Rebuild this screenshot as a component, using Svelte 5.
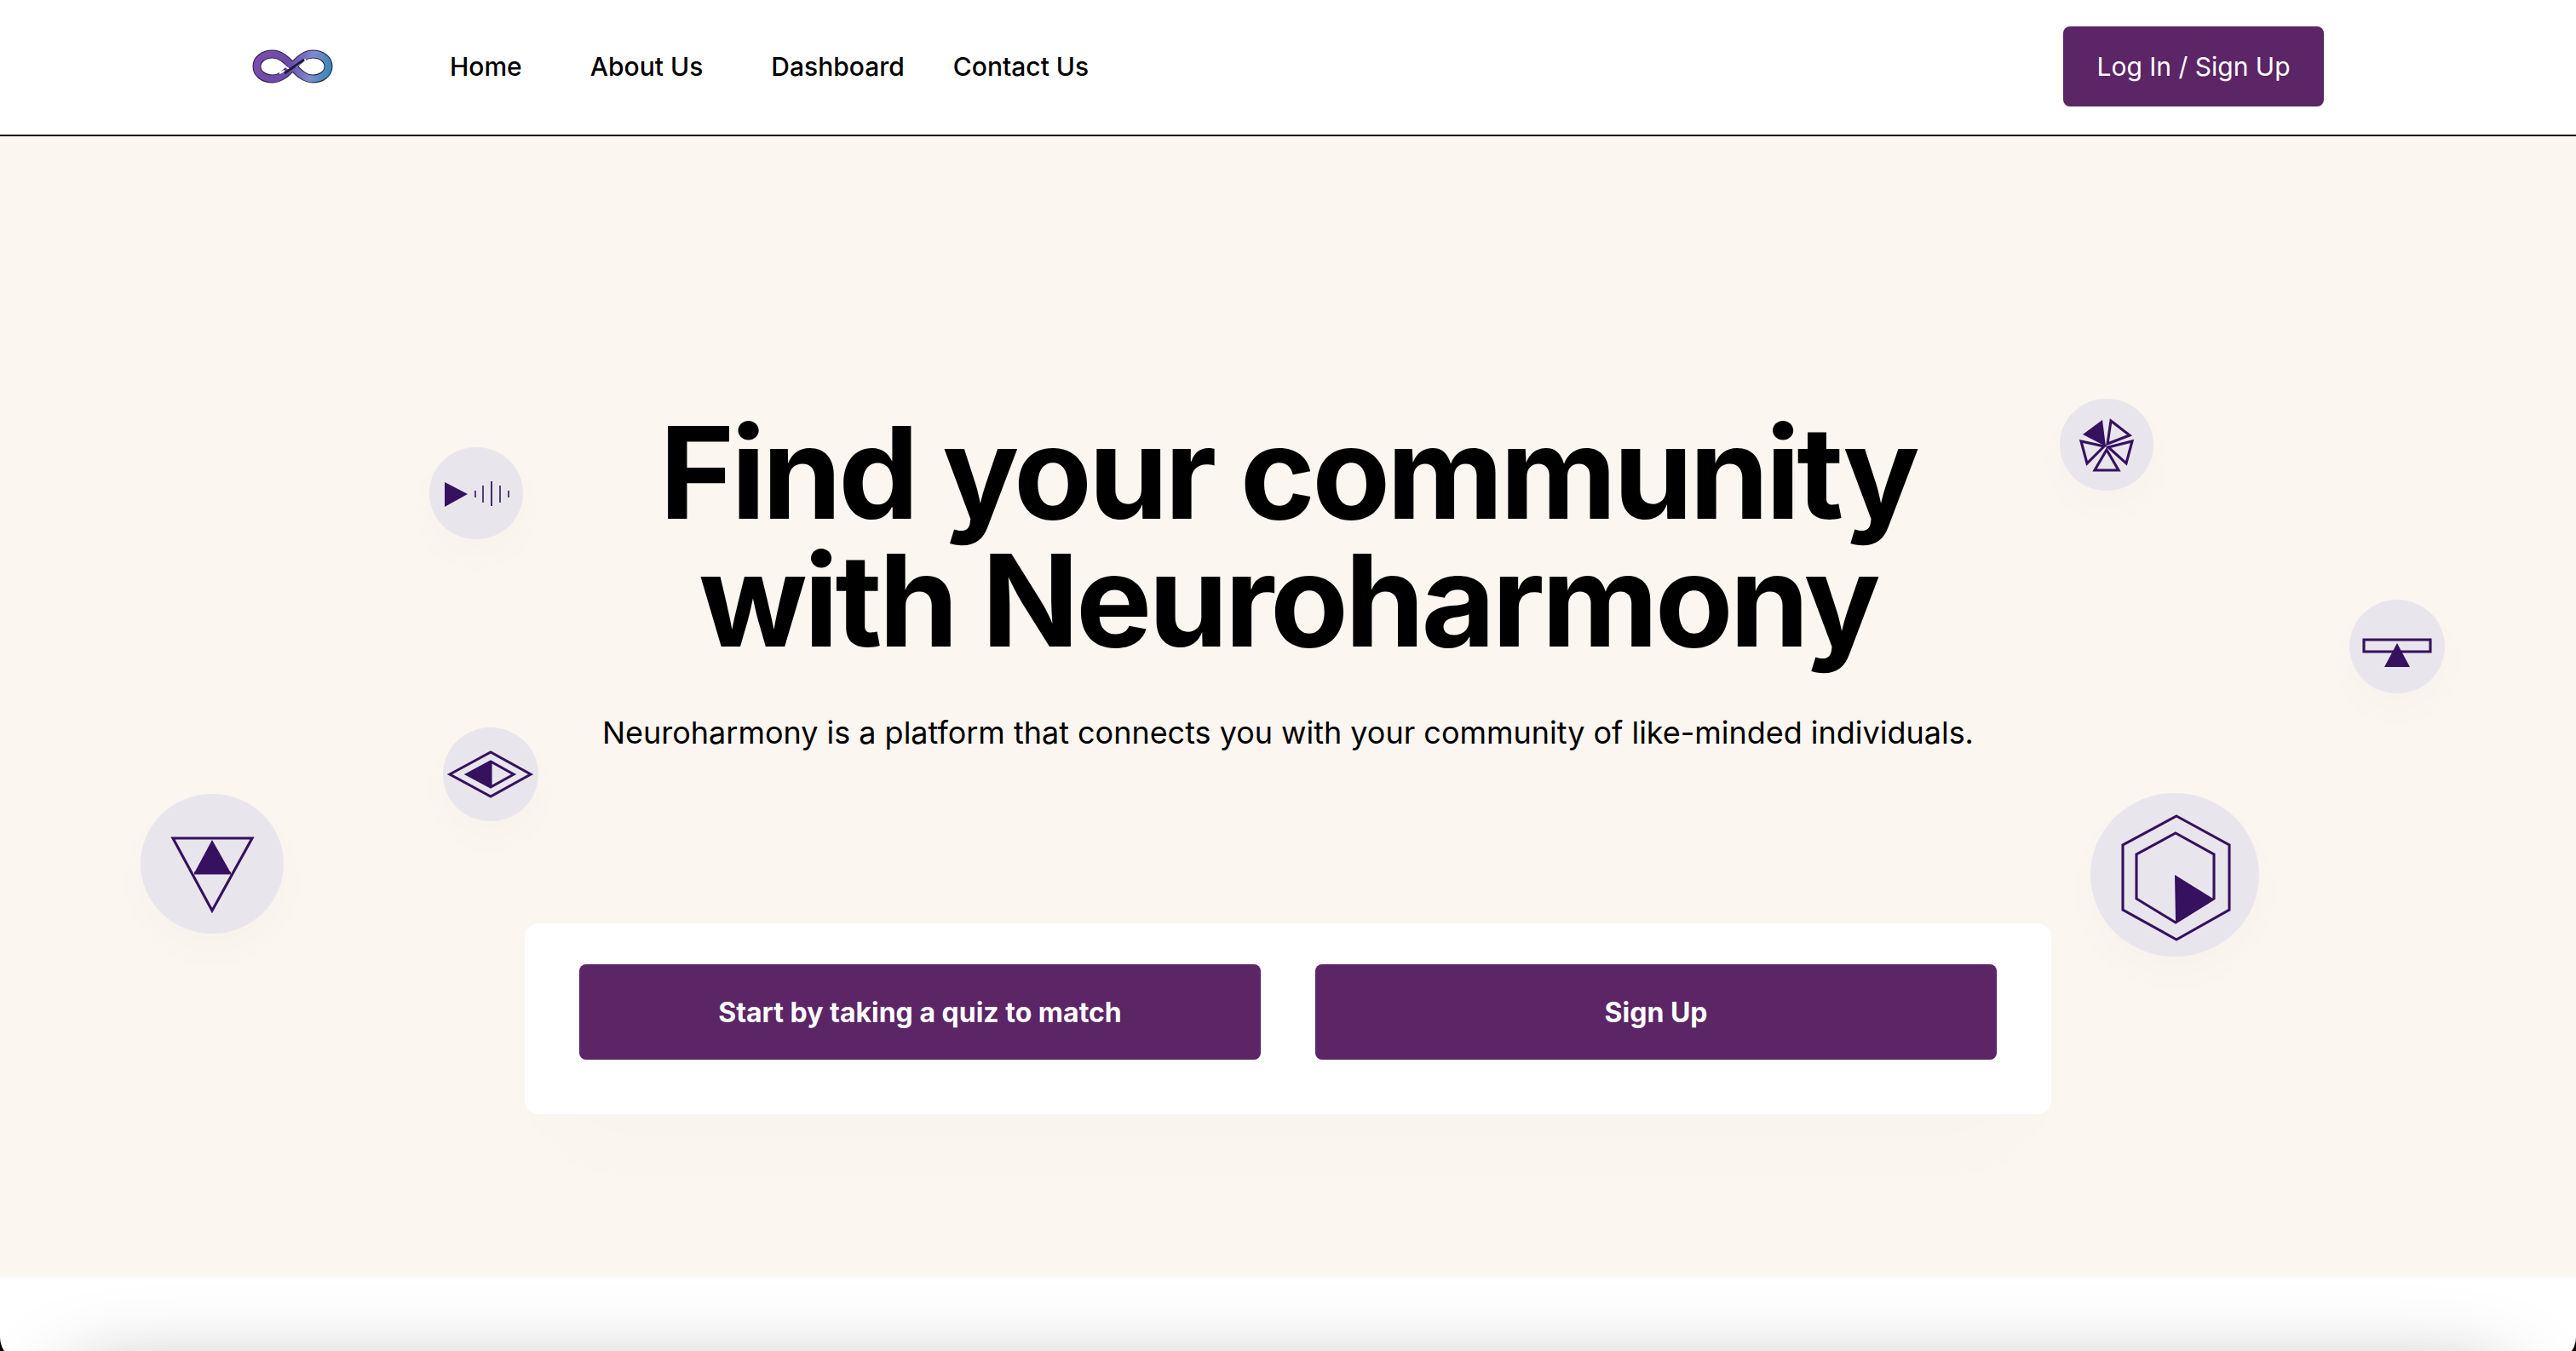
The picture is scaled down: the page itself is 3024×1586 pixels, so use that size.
<script>
  const links = ['Home', 'About Us', 'Dashboard', 'Contact Us'];
  const infinity =
    'M46.5 19C39 11 32 4.5 23 4.5C12 4.5 4.5 11 4.5 19C4.5 27 12 33.5 23 33.5C32 33.5 39 27 46.5 19C54 11 61 4.5 70 4.5C81 4.5 88.5 11 88.5 19C88.5 27 81 33.5 70 33.5C61 33.5 54 27 46.5 19Z';
</script>

<div class="page">
  <header class="top">
    <div class="brand">
      <svg class="logo" viewBox="0 0 94 38" aria-hidden="true">
        <defs>
          <linearGradient id="inf" gradientUnits="userSpaceOnUse" x1="0" x2="94" y1="10" y2="28">
            <stop offset="0" stop-color="#7d4bb0" />
            <stop offset="0.45" stop-color="#6a4aa8" />
            <stop offset="0.72" stop-color="#7f8bd0" />
            <stop offset="1" stop-color="#2c86b4" />
          </linearGradient>
        </defs>
        <path d={infinity} fill="none" stroke="#26243a" stroke-width="10" />
        <path d={infinity} fill="none" stroke="url(#inf)" stroke-width="8" />
        <path d="M37 18L43 23M31 27L37 24M56 15L50 19M62 11L56 14" fill="none" stroke="#fff" stroke-width="2" />
        <path d="M37 27L60 11" fill="none" stroke="#1c1a45" stroke-width="3" />
      </svg>
    </div>
    <nav class="links">
      {#each links as link}
        <a href="#top">{link}</a>
      {/each}
    </nav>
    <button class="login">Log In / Sign Up</button>
  </header>

  <main class="hero">
    <h1>Find your community<br />with Neuroharmony</h1>
    <p>Neuroharmony is a platform that connects you with your community of like-minded individuals.</p>
    <div class="cta">
      <button>Start by taking a quiz to match</button>
      <button>Sign Up</button>
    </div>

    <div class="bubble b1">
      <svg viewBox="0 0 110 108"><path class="f" d="M18 41L45 55L18 70Z" /><path class="bar" d="M54 51V59M83 45V65M63 45V65M93 51V59" /><path class="s thin" d="M73 40V69" /></svg>
    </div>
    <div class="bubble b2">
      <svg viewBox="0 0 112 110"><path class="s" d="M8 55L56 29L103 55L56 81Z" /><path class="f" d="M28 55L56 40V70Z" /><path class="s" d="M28 55L56 40L83 55L56 70ZM56 40V70" /></svg>
    </div>
    <div class="bubble b3">
      <svg viewBox="0 0 168 164"><path class="s" d="M38 52H131L84 137Z" /><path class="f" d="M84 54L106 93H63Z" /><path class="s" d="M63 93H106" /></svg>
    </div>
    <div class="bubble b4">
      <svg viewBox="0 0 110 108"><path class="f" d="M27 42L50 25L54 56Z" /><path class="s" d="M60 26L82 43L56 53ZM25 50L52 56L32 76ZM57 57L85 50L78 76ZM55 60L69 84H41Z" /></svg>
    </div>
    <div class="bubble b5">
      <svg viewBox="0 0 112 110"><path class="s" d="M17 47H95V61H17Z" /><path class="f" d="M56 51L71 79H41Z" /></svg>
    </div>
    <div class="bubble b6">
      <svg viewBox="0 0 198 192"><path class="s" d="M101 27L163 61V137L101 172L38 137V61Z" /><path class="s" d="M100 47L145 72V124L100 152L54 124V72Z" /><path class="f" d="M99 96L144 124L100 151Z" /></svg>
    </div>
  </main>

  <section class="below">
    <div class="sheet">
      <div class="panel"></div>
    </div>
  </section>
</div>

<style>
  :global(body) {
    margin: 0;
    background: #fff;
    font-family: Inter, "Liberation Sans", sans-serif;
  }

  .page {
    height: 1586px;
    overflow: hidden;
    display: flex;
    flex-direction: column;
  }

  .top {
    height: 158px;
    box-sizing: content-box;
    border-bottom: 2px solid #000;
    display: flex;
    align-items: center;
    padding: 0 296px 0 297px;
    background: #fff;
    flex: none;
  }

  .brand {
    width: 231px;
    display: flex;
    align-items: center;
    margin-top: -2px;
  }

  .logo {
    width: 94px;
    height: 38px;
    overflow: visible;
  }

  .links {
    display: flex;
    gap: 80px;
    flex: 1;
    margin-top: -2px;
  }

  .links a {
    color: #000;
    font-size: 30px;
    font-weight: 500;
    text-decoration: none;
  }

  .links a:last-child {
    margin-left: -23px;
  }

  .login {
    width: 306px;
    height: 94px;
    margin-top: -2px;
    border: 0;
    border-radius: 8px;
    background: #5b2566;
    color: #fff;
    font: 400 30px Inter, "Liberation Sans", sans-serif;
  }

  .hero {
    position: relative;
    height: 1340px;
    flex: none;
    background: #fbf6f0;
    display: flex;
    flex-direction: column;
    align-items: center;
    padding-top: 320px;
    box-sizing: border-box;
  }

  h1 {
    margin: 0;
    font-size: 150px;
    line-height: 150px;
    font-weight: 700;
    letter-spacing: -4px;
    text-align: center;
    color: #000;
  }

  .hero p {
    margin: 58px 0 0;
    font-size: 36px;
    line-height: 44px;
    letter-spacing: -0.02px;
    color: #000;
  }

  .cta {
    margin-top: 202px;
    width: 1792px;
    box-sizing: border-box;
    padding: 48px 64px 64px;
    display: flex;
    gap: 64px;
    background: #fff;
    border-radius: 16px;
    box-shadow: 0 70px 110px -20px rgba(60, 30, 70, 0.012);
  }

  .cta button {
    flex: 1;
    height: 112px;
    border: 0;
    border-radius: 8px;
    background: #5b2566;
    color: #fff;
    font: 700 32px Inter, "Liberation Sans", sans-serif;
  }

  .bubble {
    position: absolute;
    border-radius: 50%;
    background: #e9e5ec;
    box-shadow: 0 20px 50px rgba(60, 30, 70, 0.02);
  }

  .bubble svg {
    display: block;
    width: 100%;
    height: 100%;
  }

  .f {
    fill: #35115f;
  }

  .s {
    fill: none;
    stroke: #35115f;
    stroke-width: 3.1;
  }

  .thin {
    stroke-width: 1.8;
  }

  .bar {
    fill: none;
    stroke: #55407a;
    stroke-width: 2;
  }

  .b1 { left: 504px; top: 365px; width: 110px; height: 108px; }
  .b2 { left: 520px; top: 694px; width: 112px; height: 110px; }
  .b3 { left: 165px; top: 772px; width: 168px; height: 164px; }
  .b4 { left: 2418px; top: 308px; width: 110px; height: 108px; }
  .b5 { left: 2758px; top: 544px; width: 112px; height: 110px; }
  .b6 { left: 2454px; top: 771px; width: 198px; height: 192px; }

  .below {
    flex: 1;
    background: #000;
    position: relative;
  }

  .sheet {
    position: relative;
    height: 98px;
    background: #fff;
    overflow: hidden;
    border-radius: 0 0 28px 28px;
  }

  .panel {
    position: absolute;
    left: 70px;
    right: 70px;
    top: 120px;
    height: 300px;
    border-radius: 60px;
    background: #ddd;
    box-shadow: 0 0 100px rgba(0, 0, 0, 0.36);
  }
</style>
